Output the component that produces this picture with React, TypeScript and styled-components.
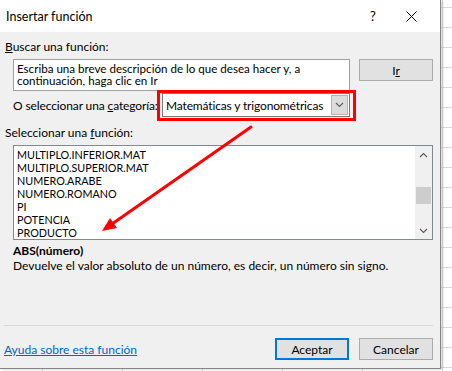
import React from "react"
import styled, { createGlobalStyle } from "styled-components"

const GlobalStyle = createGlobalStyle`
  html, body {
    margin: 0;
    padding: 0;
  }
  body {
    width: 452px;
    height: 371px;
    overflow: hidden;
    background-color: #ffffff;
    background-image:
      linear-gradient(#dadada 1px, transparent 1px),
      linear-gradient(90deg, #d4d4d4 1px, transparent 1px);
    background-size: 80px 20px;
    background-position: 42px 7px;
    font-family: Lato, "Liberation Sans", sans-serif;
    font-size: 12px;
    color: #000;
  }
`

const Dialog = styled.div`
  position: relative;
  width: 440px;
  height: 368px;
  display: flex;
  flex-direction: column;
  background: #f0f0f0;
  border-right: 1px solid #868686;
  border-bottom: 1px solid #868686;
  box-shadow: 2px 1px 2px rgba(0, 0, 0, 0.12);
`

const TitleBar = styled.div`
  height: 32px;
  flex: none;
  display: flex;
  align-items: center;
  background: #ffffff;
  padding-left: 6px;
`

const Title = styled.span`
  flex: 1;
  font-size: 12.5px;
`

const TitleButton = styled.span<{ $width: number }>`
  width: ${(p) => p.$width}px;
  height: 32px;
  display: flex;
  align-items: center;
  justify-content: center;
  font-size: 13px;
`

const Label = styled.div<{ $top: number; $left?: number }>`
  margin-top: ${(p) => p.$top}px;
  margin-left: ${(p) => p.$left ?? 5}px;
  line-height: 15px;
  height: 15px;
  white-space: nowrap;
`

const Key = styled.span`
  text-decoration: underline;
`

const SearchRow = styled.div`
  display: flex;
  align-items: flex-start;
  margin: 5px 0 0 13px;
  gap: 9px;
`

const SearchBox = styled.div`
  width: 329px;
  height: 24px;
  padding: 3px 3px 3px 3px;
  background: #fff;
  border: 1px solid #a0a0a0;
  font-size: 11.6px;
  line-height: 12px;
`

const Button = styled.button<{ $primary?: boolean }>`
  width: 74px;
  height: 22px;
  padding: 0;
  box-sizing: border-box;
  background: #e1e1e1;
  border: ${(p) => (p.$primary ? "2px solid #0078d7" : "1px solid #adadad")};
  font-family: inherit;
  font-size: 12px;
  color: #000;
`

const CategoryRow = styled.div`
  display: flex;
  align-items: center;
  margin: 2px 0 0 13px;
`

const CategoryLabel = styled.span`
  width: 149px;
  white-space: nowrap;
  letter-spacing: -0.12px;
`

const Select = styled.div`
  width: 186px;
  height: 22px;
  display: flex;
  align-items: center;
  background: #fff;
  border: 1px solid #7a7a7a;
`

const SelectText = styled.span`
  flex: 1;
  padding-left: 3px;
  letter-spacing: -0.15px;
`

const SelectArrow = styled.span`
  width: 15px;
  height: 18px;
  margin-right: 1px;
  display: flex;
  align-items: center;
  justify-content: center;
  background: #dcdcdc;
  border: 1px solid #b5b5b5;
`

const ListBox = styled.div`
  margin: 5px 0 0 13px;
  width: 418px;
  height: 93px;
  display: flex;
  background: #fff;
  border: 1px solid #828790;
`

const ListItems = styled.div`
  flex: 1;
  padding: 2px 0 0 3px;
  overflow: hidden;
`

const ListItem = styled.div`
  height: 13px;
  line-height: 13px;
  font-size: 10.8px;
  white-space: nowrap;
`

const ScrollBar = styled.div`
  width: 17px;
  display: flex;
  flex-direction: column;
  align-items: center;
  background: #f0f0f0;
`

const ScrollArrow = styled.div`
  height: 17px;
  width: 17px;
  display: flex;
  align-items: center;
  justify-content: center;
`

const ScrollTrack = styled.div`
  flex: 1;
  width: 15px;
  display: flex;
  flex-direction: column;
`

const ScrollThumb = styled.div<{ $top: number }>`
  margin-top: ${(p) => p.$top}px;
  height: 17px;
  background: #cdcdcd;
`

const Signature = styled.div`
  margin: 3px 0 0 13px;
  line-height: 15px;
  font-weight: bold;
`

const Description = styled.div`
  margin-left: 13px;
  line-height: 15px;
`

const Separator = styled.div`
  margin: auto 7px 0 4px;
  height: 1px;
  background: #dadada;
`

const Footer = styled.div`
  display: flex;
  align-items: center;
  margin: 12px 7px 8px 4px;
  gap: 10px;
`

const HelpLink = styled.a`
  flex: 1;
  color: #0066cc;
  text-decoration: underline;
  cursor: pointer;
`

const Overlay = styled.svg`
  position: absolute;
  left: 0;
  top: 0;
  pointer-events: none;
`

const Highlight = styled.div`
  position: absolute;
  left: 157px;
  top: 90px;
  width: 193px;
  height: 25px;
  border: 3px solid #ff0000;
  pointer-events: none;
`

const functions = [
  "MULTIPLO.INFERIOR.MAT",
  "MULTIPLO.SUPERIOR.MAT",
  "NUMERO.ARABE",
  "NUMERO.ROMANO",
  "PI",
  "POTENCIA",
  "PRODUCTO",
]

function Chevron({ up }: { up?: boolean }) {
  return (
    <svg width="9" height="6" viewBox="0 0 9 6">
      <polyline
        points={up ? "1,5 4.5,1.5 8,5" : "1,1 4.5,4.5 8,1"}
        fill="none"
        stroke="#606060"
        strokeWidth="1.2"
      />
    </svg>
  )
}

export default function App() {
  return (
    <>
      <GlobalStyle />
      <Dialog>
        <TitleBar>
          <Title>Insertar función</Title>
          <TitleButton $width={30}>?</TitleButton>
          <TitleButton $width={46}>
            <svg width="11" height="11" viewBox="0 0 11 11">
              <path d="M0.5 0.5 L10.5 10.5 M10.5 0.5 L0.5 10.5" stroke="#000" strokeWidth="1" />
            </svg>
          </TitleButton>
          <span style={{ width: 6 }} />
        </TitleBar>

        <Label $top={7}>
          <Key>B</Key>uscar una función:
        </Label>
        <SearchRow>
          <SearchBox>
            Escriba una breve descripción de lo que desea hacer y, a continuación, haga clic en Ir
          </SearchBox>
          <Button>
            I<Key>r</Key>
          </Button>
        </SearchRow>

        <CategoryRow>
          <CategoryLabel>
            O seleccionar una <Key>c</Key>ategoría:
          </CategoryLabel>
          <Select>
            <SelectText>Matemáticas y trigonométricas</SelectText>
            <SelectArrow>
              <Chevron />
            </SelectArrow>
          </Select>
        </CategoryRow>

        <Label $top={8}>
          Seleccionar una <Key>f</Key>unción:
        </Label>
        <ListBox>
          <ListItems>
            {functions.map((f) => (
              <ListItem key={f}>{f}</ListItem>
            ))}
          </ListItems>
          <ScrollBar>
            <ScrollArrow>
              <Chevron up />
            </ScrollArrow>
            <ScrollTrack>
              <ScrollThumb $top={24} />
            </ScrollTrack>
            <ScrollArrow>
              <Chevron />
            </ScrollArrow>
          </ScrollBar>
        </ListBox>

        <Signature>ABS(número)</Signature>
        <Description>Devuelve el valor absoluto de un número, es decir, un número sin signo.</Description>

        <Separator />
        <Footer>
          <HelpLink>Ayuda sobre esta función</HelpLink>
          <Button $primary>Aceptar</Button>
          <Button>Cancelar</Button>
        </Footer>

        <Highlight />
        <Overlay width="440" height="368" viewBox="0 0 440 368">
          <line x1="251" y1="127" x2="112" y2="224" stroke="#ff0000" strokeWidth="3" strokeLinecap="round" />
          <polygon points="102,231 117,228 110,218" fill="#ff0000" />
        </Overlay>
      </Dialog>
    </>
  )
}
